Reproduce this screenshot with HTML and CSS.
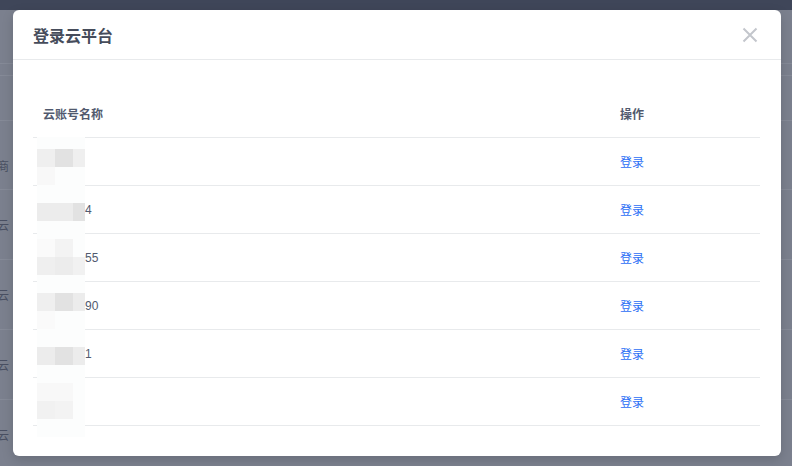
FILE: index.html
```html
<!DOCTYPE html>
<html lang="zh-CN">
<head>
    <meta charset="UTF-8">
    <meta name="viewport" content="width=device-width, initial-scale=1.0">
    <title>登录云平台</title>
    <link rel="stylesheet" href="styles.css">
</head>
<body>

    <!-- page behind the dialog, dimmed by the mask -->
    <div class="page">
        <div class="page-top"></div>
        <div class="page-band a"></div>
        <div class="page-band b"></div>
        <div class="page-band c"></div>
        <div class="page-row first"><span class="page-cell">商</span></div>
        <div class="page-row"><span class="page-cell">云</span></div>
        <div class="page-row"><span class="page-cell">云</span></div>
        <div class="page-row"><span class="page-cell">云</span></div>
        <div class="page-row"><span class="page-cell">云</span></div>
    </div>

    <div class="modal">
        <div class="modal-header">
            <div class="modal-title">登录云平台</div>
            <svg class="modal-close" width="16" height="16" viewBox="0 0 16 16">
                <path d="M1.5 1.5 L14.5 14.5 M14.5 1.5 L1.5 14.5" stroke="#c3c6cc" stroke-width="2" fill="none"/>
            </svg>
        </div>

        <div class="modal-body">
            <div class="table">
                <div class="row head">
                    <div class="cell">云账号名称</div>
                    <div class="cell">操作</div>
                </div>
                <div class="row">
                    <div class="cell"><span class="masked"></span></div>
                    <div class="cell"><a class="link" href="#">登录</a></div>
                </div>
                <div class="row">
                    <div class="cell"><span class="masked"></span>4</div>
                    <div class="cell"><a class="link" href="#">登录</a></div>
                </div>
                <div class="row">
                    <div class="cell"><span class="masked"></span>55</div>
                    <div class="cell"><a class="link" href="#">登录</a></div>
                </div>
                <div class="row">
                    <div class="cell"><span class="masked"></span>90</div>
                    <div class="cell"><a class="link" href="#">登录</a></div>
                </div>
                <div class="row">
                    <div class="cell"><span class="masked"></span>1</div>
                    <div class="cell"><a class="link" href="#">登录</a></div>
                </div>
                <div class="row">
                    <div class="cell"><span class="masked"></span></div>
                    <div class="cell"><a class="link" href="#">登录</a></div>
                </div>

                <!-- pixelated cover over the account names -->
                <div class="mosaic">
                    <span></span><span></span><span></span>
                    <span class="s3"></span><span class="s1"></span><span class="s3"></span>
                    <span class="s6"></span><span></span><span></span>
                    <span></span><span></span><span></span>
                    <span class="s2"></span><span class="s2"></span><span class="s1"></span>
                    <span></span><span></span><span></span>
                    <span class="s7"></span><span class="s5"></span><span></span>
                    <span class="s3"></span><span class="s2"></span><span class="s4"></span>
                    <span></span><span></span><span></span>
                    <span class="s3"></span><span class="s1"></span><span class="s2"></span>
                    <span class="s7"></span><span></span><span></span>
                    <span></span><span></span><span></span>
                    <span class="s2"></span><span class="s1"></span><span class="s2"></span>
                    <span></span><span></span><span></span>
                    <span class="s6"></span><span class="s6"></span><span></span>
                    <span class="s4"></span><span class="s5"></span><span></span>
                    <span></span><span></span><span></span>
                </div>
            </div>
        </div>
    </div>

</body>
</html>
```

FILE: styles.css
```css
* {
    margin: 0;
    padding: 0;
    box-sizing: border-box;
}

body {
    width: 792px;
    height: 466px;
    overflow: hidden;
    position: relative;
    background: #7b808e;
    font-family: "Liberation Sans", "Noto Sans CJK SC", sans-serif;
    font-size: 12px;
    color: #515a6e;
}

/* dimmed page */
.page {
    display: flex;
    flex-direction: column;
}

.page-top {
    height: 10px;
    background: #3f4659;
}

.page-band {
    border-bottom: 1px solid #858a97;
}

.page-band.a { height: 54px; }
.page-band.b { height: 12px; }
.page-band.c { height: 45px; }

.page-row {
    height: 70px;
    display: flex;
    align-items: center;
    border-bottom: 1px solid #858a97;
}

.page-row.first {
    height: 69px;
    padding-top: 20px;
}

.page-cell {
    margin-left: -3px;
    color: #4a5062;
    font-size: 12px;
}

/* dialog */
.modal {
    position: absolute;
    left: 13px;
    top: 10px;
    width: 768px;
    background: #fff;
    border-radius: 6px;
    box-shadow: 0 4px 12px rgba(0, 0, 0, 0.15);
}

.modal-header {
    height: 50px;
    display: flex;
    justify-content: space-between;
    align-items: center;
    padding: 0 23px 0 20px;
    border-bottom: 1px solid #e8eaec;
}

.modal-title {
    font-size: 16px;
    font-weight: bold;
    color: #464c5b;
}

.modal-body {
    padding: 30px 21px 30px 20px;
}

.table {
    position: relative;
}

.row {
    height: 48px;
    display: grid;
    grid-template-columns: 577px 1fr;
    align-items: center;
    border-bottom: 1px solid #e8eaec;
}

.cell {
    padding-left: 10px;
    white-space: nowrap;
}

.row.head .cell {
    font-weight: bold;
    color: #515a6e;
}

.masked {
    display: inline-block;
    width: 42px;
}

.link {
    color: #2b6ef5;
    text-decoration: none;
}

.mosaic {
    position: absolute;
    left: 4px;
    top: 47px;
    width: 48px;
    display: grid;
    grid-template-columns: 18px 18px 12px;
    grid-template-rows: 12px repeat(16, 18px);
    background: #fcfdfd;
}

.mosaic .s1 { background: #e2e2e2; }
.mosaic .s2 { background: #ececec; }
.mosaic .s3 { background: #efefef; }
.mosaic .s4 { background: #f1f1f1; }
.mosaic .s5 { background: #f3f3f3; }
.mosaic .s6 { background: #f8f8f8; }
.mosaic .s7 { background: #fafafa; }
```
